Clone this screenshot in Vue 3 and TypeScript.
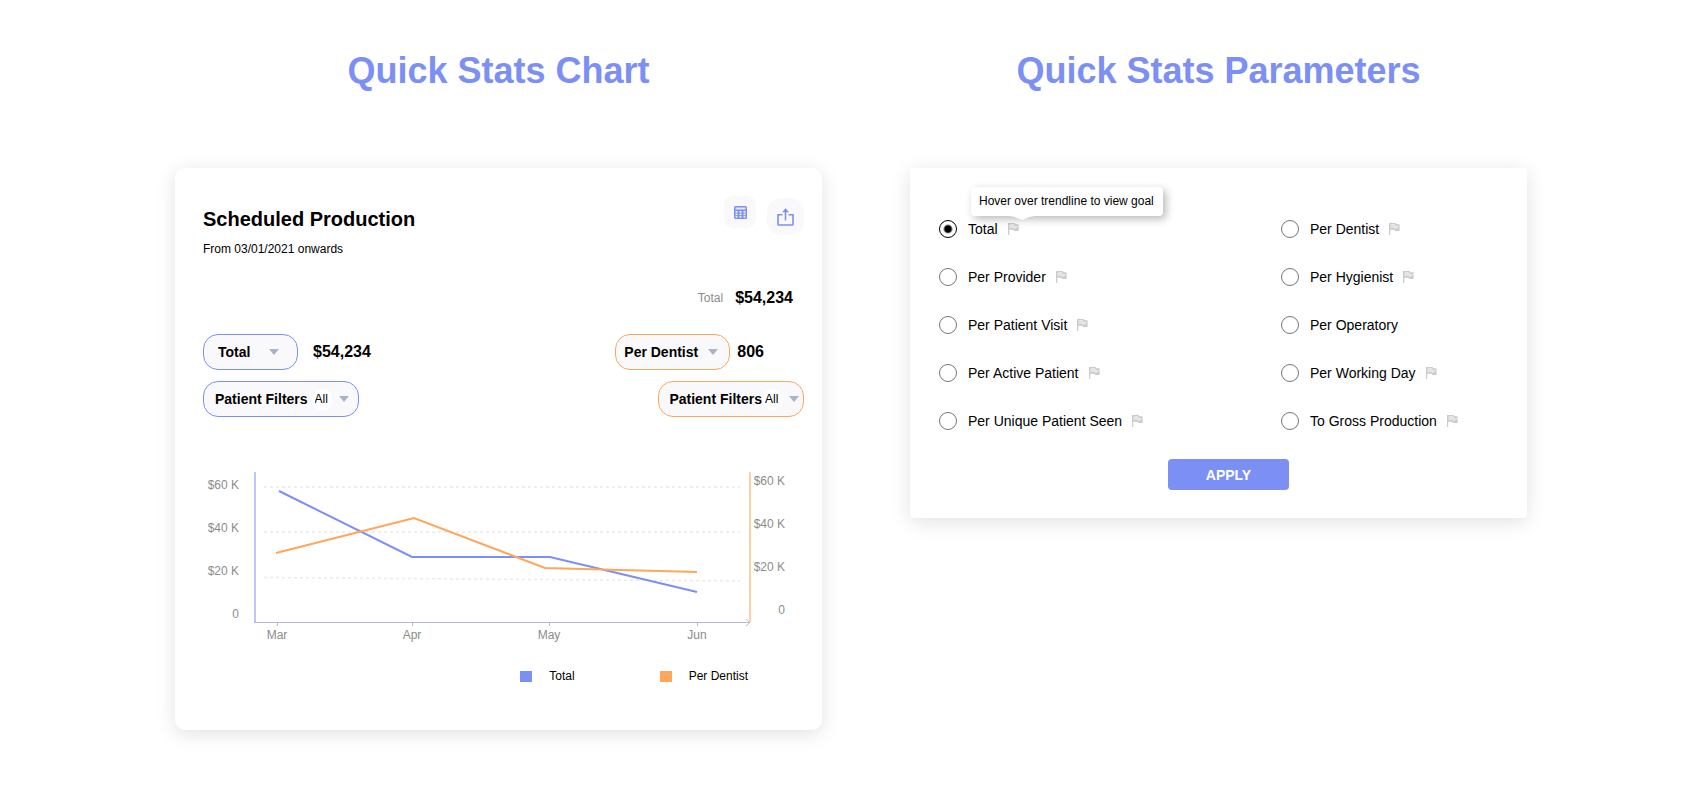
<script setup lang="ts">
import { ref } from 'vue'

interface Option {
  label: string
  goal: boolean
}

interface Point {
  x: number
  y: number
}

const leftOptions: Option[] = [
  { label: 'Total', goal: true },
  { label: 'Per Provider', goal: true },
  { label: 'Per Patient Visit', goal: true },
  { label: 'Per Active Patient', goal: true },
  { label: 'Per Unique Patient Seen', goal: true },
]

const rightOptions: Option[] = [
  { label: 'Per Dentist', goal: true },
  { label: 'Per Hygienist', goal: true },
  { label: 'Per Operatory', goal: false },
  { label: 'Per Working Day', goal: true },
  { label: 'To Gross Production', goal: true },
]

const columns = [leftOptions, rightOptions]
const selected = ref('Total')

const primary = ref('Total')
const secondary = ref('Per Dentist')
const primaryFilter = ref('All')
const secondaryFilter = ref('All')

const months = [
  { label: 'Mar', x: 74 },
  { label: 'Apr', x: 209 },
  { label: 'May', x: 346 },
  { label: 'Jun', x: 494 },
]
const scale = ['$60 K', '$40 K', '$20 K', '0']

const totalSeries: Point[] = [
  { x: 76, y: 21 },
  { x: 209, y: 87 },
  { x: 347, y: 87 },
  { x: 494, y: 122 },
]
const dentistSeries: Point[] = [
  { x: 73, y: 83 },
  { x: 211, y: 48 },
  { x: 342, y: 98 },
  { x: 494, y: 102 },
]
const toPoints = (series: Point[]): string => series.map((p) => `${p.x},${p.y}`).join(' ')
</script>

<template>
  <main class="page">
    <section class="panel">
      <h1 class="title">Quick Stats Chart</h1>
      <div class="card chart-card">
        <header class="card-head">
          <div>
            <h2 class="heading">Scheduled Production</h2>
            <p class="since">From 03/01/2021 onwards</p>
          </div>
          <div class="tools">
            <button type="button" class="tool" aria-label="Table view">
              <svg width="13" height="13" viewBox="0 0 13 13">
                <rect width="13" height="13" rx="1.5" fill="#7c8ff5" />
                <rect x="1.5" y="1.5" width="10" height="2" fill="#e4e8ff" />
                <g fill="#f4f5ff">
                  <rect x="1.5" y="5" width="2" height="1.7" />
                  <rect x="5.500" y="5" width="2" height="1.7" />
                  <rect x="9.500" y="5" width="2" height="1.7" />
                  <rect x="1.5" y="7.600" width="2" height="1.6" />
                  <rect x="5.500" y="7.600" width="2" height="1.6" />
                  <rect x="9.500" y="7.600" width="2" height="1.6" />
                  <rect x="1.5" y="10.100" width="2" height="1.5" />
                  <rect x="5.500" y="10.100" width="2" height="1.5" />
                  <rect x="9.500" y="10.100" width="2" height="1.5" />
                </g>
              </svg>
            </button>
            <button type="button" class="tool tool-large" aria-label="Share">
              <svg width="17" height="18" viewBox="0 0 17 18" fill="none" stroke="#7c8ff5" stroke-width="1.600">
                <path d="M5.500 6.700H1v9.500q0 .8.8.8h13.400q.8 0 .8-.8V6.700h-4.500" />
                <path d="M8.500 12.500V3" />
                <path d="M8.500 .2 12 4.200H5z" fill="#7c8ff5" stroke="none" />
              </svg>
            </button>
          </div>
        </header>

        <div class="summary">
          <span class="summary-label">Total</span>
          <strong class="amount">$54,234</strong>
        </div>

        <div class="row">
          <div class="metric">
            <div class="pill pill-total">
              <select v-model="primary" class="pick" aria-label="First measure">
                <option>Total</option>
              </select>
              <svg class="arrow" width="10" height="6" viewBox="0 0 10 6"><path d="M0 0h10L5 6z" /></svg>
            </div>
            <strong class="amount">$54,234</strong>
          </div>
          <div class="metric metric-right">
            <div class="pill pill-dentist orange">
              <select v-model="secondary" class="pick" aria-label="Second measure">
                <option>Per Dentist</option>
              </select>
              <svg class="arrow" width="10" height="6" viewBox="0 0 10 6"><path d="M0 0h10L5 6z" /></svg>
            </div>
            <strong class="amount">806</strong>
          </div>
        </div>

        <div class="row row-filters">
          <label class="filter">
            <span>Patient Filters</span>
            <select v-model="primaryFilter" class="chip">
              <option>All</option>
            </select>
            <svg class="arrow" width="10" height="6" viewBox="0 0 10 6"><path d="M0 0h10L5 6z" /></svg>
          </label>
          <label class="filter filter-tight orange">
            <span>Patient Filters</span>
            <select v-model="secondaryFilter" class="chip">
              <option>All</option>
            </select>
            <svg class="arrow" width="10" height="6" viewBox="0 0 10 6"><path d="M0 0h10L5 6z" /></svg>
          </label>
        </div>

        <svg class="chart" viewBox="0 0 601 176" role="img" aria-label="Production by month">
          <g class="grid-lines">
            <path d="M61 17H537" />
            <path d="M61 62H537" />
            <path d="M61 107.500 537 111" />
          </g>
          <path class="axis-x" d="M52 152.500H547M543 149l4 3.500-4 3.500" />
          <path v-for="m in months" :key="m.label" class="axis-x" :d="`M${m.x + 0.5} 153v3`" />
          <path class="axis-left" d="M52 2V153" />
          <path class="axis-right" d="M547 2V152" />
          <polyline class="line" stroke="#7c8ff5" :points="toPoints(totalSeries)" />
          <polyline class="line" stroke="#ffa65a" :points="toPoints(dentistSeries)" />
          <g class="scale-text" text-anchor="end">
            <text v-for="(s, i) in scale" :key="s" x="36" :y="19 + i * 43">{{ s }}</text>
            <text v-for="(s, i) in scale" :key="s" x="582" :y="15 + i * 43">{{ s }}</text>
          </g>
          <g class="scale-text" text-anchor="middle">
            <text v-for="m in months" :key="m.label" :x="m.x" y="169">{{ m.label }}</text>
          </g>
        </svg>

        <ul class="legend">
          <li><i class="swatch"></i>Total</li>
          <li><i class="swatch swatch-orange"></i>Per Dentist</li>
        </ul>
      </div>
    </section>

    <section class="panel">
      <h1 class="title">Quick Stats Parameters</h1>
      <form class="card form-card" @submit.prevent>
        <div class="options">
          <div v-for="(column, c) in columns" :key="c" class="column">
            <div v-for="option in column" :key="option.label" class="option">
              <label class="choice">
                <input v-model="selected" type="radio" name="parameter" :value="option.label" />
                <span>{{ option.label }}</span>
              </label>
              <svg v-if="option.goal" class="flag" width="11" height="12" viewBox="0 0 11 12">
                <path d="M0 0h6.600l.6 1.200H10.600v6.800H6.200l-.6-1.200H1.200V12H0z" fill="#cbcbcb" />
                <path
                  d="M2.500 1h1v1h-1zM4.500 1h1v1h-1zM1.500 2h1v1h-1zM3.500 2h1v1h-1zM5.500 2h1v1h-1zM2.500 3h1v1h-1zM4.500 3h1v1h-1zM6.500 3h1v1h-1zM3.500 4h1v1h-1zM5.500 4h1v1h-1zM7.500 4h1v1h-1zM6.500 5h1v1h-1zM8.500 3h1v1h-1zM1.500 4h1v1h-1z"
                  fill="#fff"
                />
              </svg>
              <div v-if="option.label === 'Total'" class="tooltip" role="tooltip">
                Hover over trendline to view goal
                <svg class="caret" width="26" height="4" viewBox="0 0 26 4">
                  <path d="M0 0H26Q20 .5 16 2.800 13 4.500 10 2.800 6 .5 0 0z" fill="#fff" />
                </svg>
              </div>
            </div>
          </div>
        </div>
        <div class="actions">
          <button type="submit" class="apply">APPLY</button>
        </div>
      </form>
    </section>
  </main>
</template>

<style>
body {
  margin: 0;
  background: #fff;
}
</style>

<style scoped>
.page {
  box-sizing: border-box;
  display: grid;
  grid-template-columns: 647fr 617fr;
  column-gap: 88px;
  align-items: start;
  padding: 49px 175px;
  font-family: 'Liberation Sans', Arial, Helvetica, sans-serif;
  color: #000;
}
.title {
  margin: 0 0 75px;
  font-size: 36px;
  line-height: 44px;
  font-weight: 700;
  text-align: center;
  color: #7c8ff5;
}
.card {
  background: #fff;
  box-shadow: 0 4px 20px rgba(0, 0, 0, 0.12);
}
.chart-card {
  padding: 28px 18px 45px 28px;
  border-radius: 10px;
}
.card-head {
  display: flex;
  justify-content: space-between;
  align-items: flex-start;
}
.heading {
  margin: 10px 0 8px;
  font-size: 20px;
  line-height: 26px;
}
.since {
  margin: 0;
  font-size: 12px;
  line-height: 18px;
}
.tools {
  display: flex;
  gap: 11px;
}
.tool {
  display: grid;
  place-items: center;
  width: 32px;
  height: 32px;
  padding: 0;
  border: 0;
  border-radius: 9px;
  background: #f9f9fc;
}
.tool-large {
  width: 37px;
  height: 37px;
  margin-top: 2px;
  border-radius: 14px;
}
.summary {
  display: flex;
  justify-content: flex-end;
  align-items: center;
  gap: 12px;
  margin-top: 30px;
  padding-right: 11px;
}
.summary-label {
  font-size: 12px;
  color: #8c8c8c;
}
.amount {
  font-size: 16px;
  line-height: 20px;
}
.row {
  display: flex;
  justify-content: space-between;
  margin-top: 26px;
}
.row-filters {
  margin-top: 11px;
}
.metric {
  display: flex;
  align-items: center;
  gap: 15px;
}
.metric-right {
  gap: 7px;
  padding-right: 40px;
}
.pill,
.filter {
  box-sizing: border-box;
  height: 36px;
  border: 1px solid #7c8ff5;
  border-radius: 15px;
  background: #f9f9fc;
}
.pill {
  display: grid;
  align-items: center;
}
.pill > * {
  grid-area: 1 / 1;
}
.pill .arrow {
  justify-self: end;
}
.pill-total {
  width: 95px;
}
.pill-total .pick {
  padding: 0 0 0 14px;
}
.pill-total .arrow {
  margin-right: 18px;
}
.pill-dentist {
  width: 115px;
}
.pill-dentist .pick {
  padding: 0 0 0 8px;
}
.pill-dentist .arrow {
  margin-right: 11px;
}
.pick,
.chip {
  appearance: none;
  margin: 0;
  border: 0;
  font-family: inherit;
  color: #000;
}
.pick {
  width: 100%;
  height: 34px;
  border-radius: 14px;
  background: transparent;
  font-size: 14px;
  font-weight: 700;
}
.arrow {
  display: block;
  fill: #a9b4cb;
  pointer-events: none;
}
.filter {
  display: flex;
  align-items: center;
  padding: 0 9px 0 11px;
  font-size: 14px;
  font-weight: 700;
}
.filter .chip {
  width: 21px;
  height: 21px;
  margin: 0 6px 0 4px;
  padding: 0 0 0 3px;
  border-radius: 50%;
  background: #fff;
  font-size: 12px;
}
.filter-tight {
  padding: 0 4px 0 10px;
}
.filter-tight .chip {
  margin-left: 0;
}
.orange {
  border-color: #ffa65a;
}
.chart {
  display: block;
  width: 100%;
  margin-top: 53px;
}
.grid-lines {
  fill: none;
  stroke: #e9e9f4;
  stroke-width: 1.500;
  stroke-dasharray: 3 3;
}
.axis-left {
  stroke: #a6b3fa;
  stroke-width: 1.500;
}
.axis-right {
  stroke: #ffc08a;
  stroke-width: 1.500;
}
.axis-x {
  fill: none;
  stroke: #b4bccb;
}
.line {
  fill: none;
  stroke-width: 2;
}
.scale-text {
  font-size: 12px;
  fill: #8c8c8c;
}
.legend {
  display: flex;
  justify-content: flex-end;
  gap: 85px;
  margin: 21px 0 0;
  padding: 0 56px 0 0;
  list-style: none;
  font-size: 12px;
  line-height: 18px;
}
.legend li {
  display: flex;
  align-items: center;
  gap: 17px;
}
.swatch {
  width: 12px;
  height: 11px;
  background: #7c8ff5;
}
.swatch-orange {
  background: #ffa65a;
}
.form-card {
  padding: 49px 0 28px 29px;
  border-radius: 4px;
}
.options {
  display: grid;
  grid-template-columns: 342fr 246fr;
}
.column {
  display: grid;
  gap: 24px;
}
.option {
  position: relative;
  display: flex;
  align-items: center;
  gap: 10px;
  height: 24px;
}
.choice {
  display: flex;
  align-items: center;
  gap: 11px;
  font-size: 14px;
}
.choice input {
  appearance: none;
  box-sizing: border-box;
  width: 18px;
  height: 18px;
  margin: 0;
  border: 1px solid #777;
  border-radius: 50%;
}
.choice input:checked {
  border-color: #000;
  background: radial-gradient(circle, #000 0 3px, #fff 5px);
}
.tooltip {
  position: absolute;
  left: 32px;
  bottom: 25px;
  padding: 0 9px 0 8px;
  border-radius: 4px;
  background: #fff;
  box-shadow: 3px 3px 8px rgba(0, 0, 0, 0.28);
  font-size: 12px;
  line-height: 29px;
  white-space: nowrap;
}
.caret {
  position: absolute;
  left: 38px;
  top: 100%;
}
.actions {
  display: flex;
  justify-content: center;
  padding-right: 9px;
  margin-top: 26px;
}
.apply {
  width: 121px;
  height: 31px;
  padding: 0;
  border: 0;
  border-radius: 4px;
  background: #7c8ff5;
  color: #fff;
  font-family: inherit;
  font-size: 14px;
  font-weight: 700;
}
</style>
